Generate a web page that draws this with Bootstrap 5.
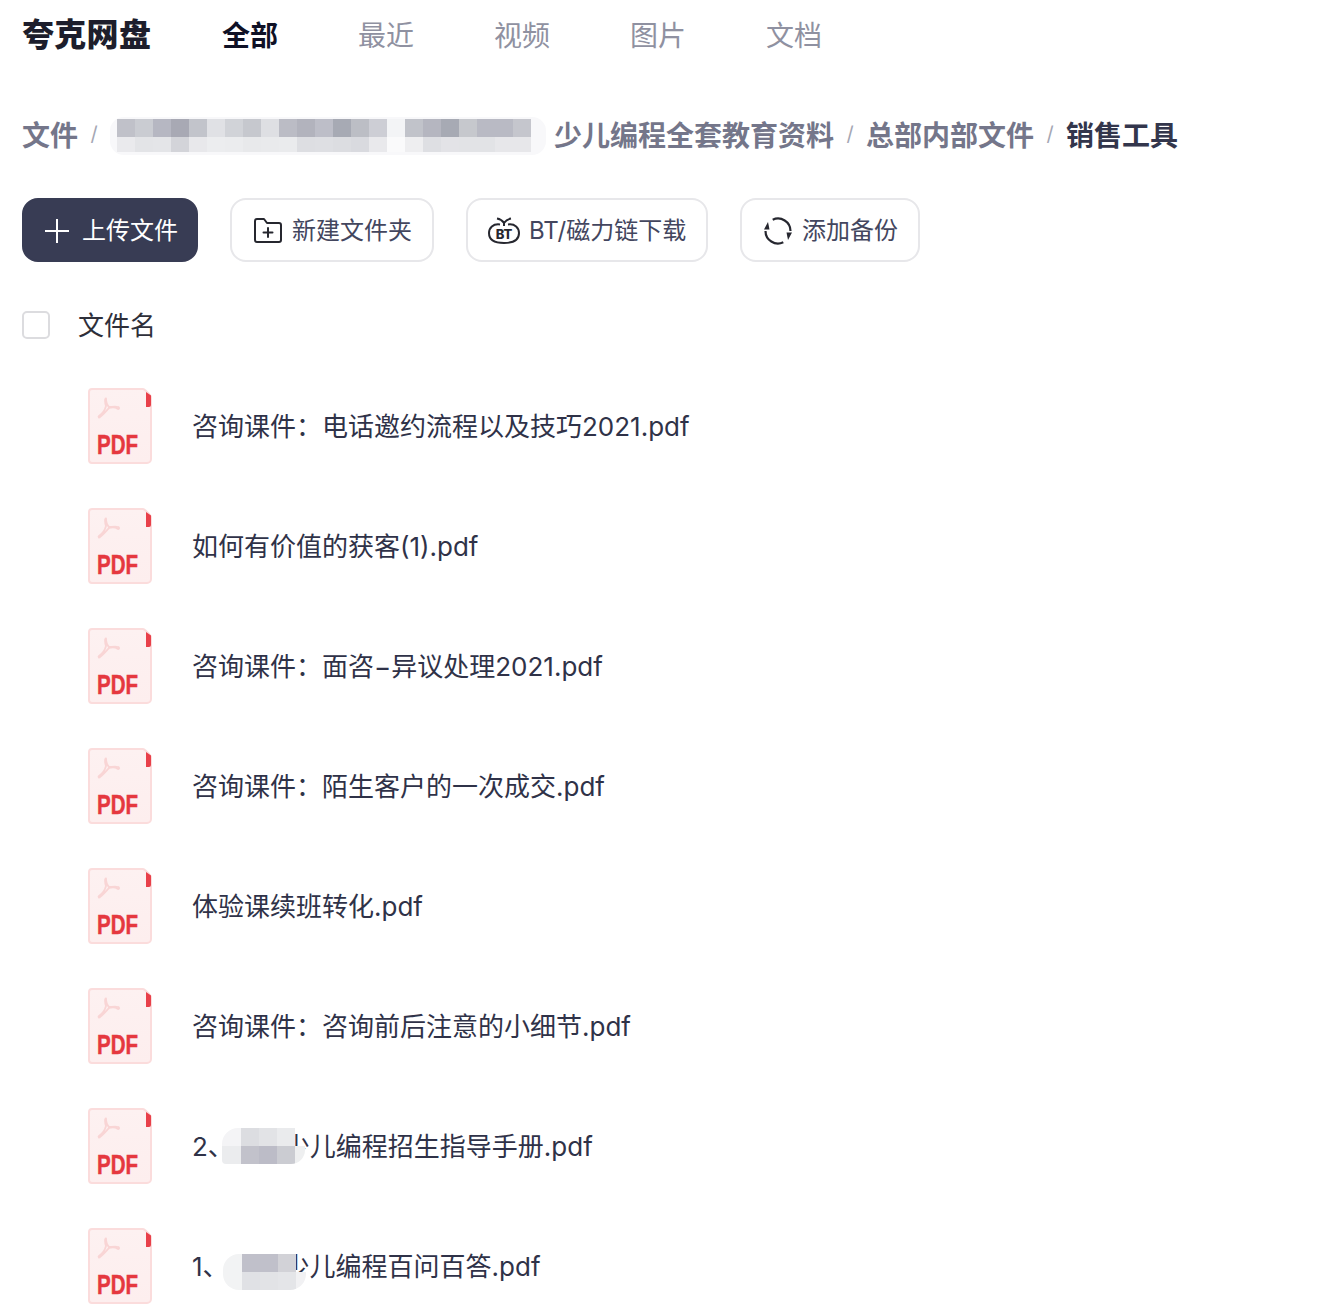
<!DOCTYPE html>
<html lang="zh-CN">
<head>
    <meta charset="UTF-8">
    <title>夸克网盘</title>
    <link href="https://cdn.jsdelivr.net/npm/bootstrap@5.3.2/dist/css/bootstrap.min.css" rel="stylesheet">
    <style>
        body {
            font-family: "Inter", "Noto Sans CJK SC", sans-serif;
            color: #2f3248;
            background: #fff;
        }
        .app-wrap { padding-left: 22px; }
        .top-bar { height: 72px; }
        .logo-text { font-size: 32px; font-weight: 900; color: #1d1e2c; width: 200px; letter-spacing: .3px; padding-bottom: 2px; }
        .top-link { font-size: 28px; color: #8f91a1; width: 136px; text-decoration: none; line-height: 40px; }
        .top-link.on { color: #0f1126; font-weight: 700; }
        .crumbs { margin-top: 44px; height: 40px; font-size: 28px; font-weight: 700; color: #74768a; line-height: 40px; }
        .crumbs .sep { width: 32px; text-align: center; font-size: 20px; font-weight: 400; color: #a5a7b4; padding-bottom: 4px; }
        .crumbs .cur { color: #33364c; }
        .crumb-blur { width: 444px; }
        .mosaic { display: grid; overflow: hidden; }
        .crumb-blur .mosaic {
            background: #f8f8fa; border-radius: 14px; width: 436px; height: 38px; padding: 2px 7px 3px;
            grid-template-columns: repeat(23, 18px); grid-template-rows: 18px 15px;
        }
        .tool-row { margin-top: 42px; gap: 32px; }
        .tool-btn {
            height: 64px; font-size: 24px; border-radius: 16px; border: 2px solid #e7e7ea; color: #43465e;
            padding: 2px 0 0 20px; display: flex; align-items: center; gap: 9px; background: #fff;
        }
        .tool-btn:hover { border-color: #e7e7ea; color: #43465e; }
        .tool-btn.upload { background: #383c54; border-color: #383c54; color: #fff; width: 176px; gap: 12px; }
        .w-folder { width: 204px; padding-left: 22px; gap: 10px; }
        .w-bt { width: 242px; }
        .w-backup { width: 180px; padding-left: 21px; }
        .list-head { margin-top: 44px; height: 38px; font-size: 26px; color: #2e2f3a; }
        .check-box { width: 28px; height: 28px; border: 2px solid #dcdcdf; border-radius: 5px; margin-right: 28px; }
        .file-list { margin-top: 22px; }
        .file-row { height: 120px; padding-left: 66px; font-size: 26px; color: #2f3248; }
        .file-row svg { flex: none; margin-right: 40px; overflow: visible; }
        .name-blur { display: inline-block; position: relative; height: 1px; }
        .name-blur .mosaic {
            position: absolute; width: 83px; height: 36px; z-index: 2;
            grid-template-columns: 19px 18px 18px 18px 10px; grid-template-rows: 18px 18px;
        }
        .blur-two { width: 50px; }
        .blur-two .mosaic { left: -12px; top: -27px; border-radius: 16px 4px 14px 4px; }
        .blur-one { width: 55px; }
        .blur-one .mosaic { left: -6px; top: -21px; border-radius: 16px 4px 16px 16px; }
    </style>
</head>
<body>
<div class="app-wrap">
    <div class="top-bar d-flex align-items-center">
        <div class="logo-text">夸克网盘</div>
        <a class="top-link on" href="#">全部</a>
        <a class="top-link" href="#">最近</a>
        <a class="top-link" href="#">视频</a>
        <a class="top-link" href="#">图片</a>
        <a class="top-link" href="#">文档</a>
    </div>

    <div class="crumbs d-flex align-items-center">
        <span>文件</span><span class="sep">/</span>
        <span class="crumb-blur"><span id="crumbMosaic" class="mosaic"></span></span>
        <span>少儿编程全套教育资料</span><span class="sep">/</span>
        <span>总部内部文件</span><span class="sep">/</span>
        <span class="cur">销售工具</span>
    </div>

    <div class="tool-row d-flex">
        <button class="btn tool-btn upload" type="button">
            <svg width="26" height="26" viewBox="0 0 26 26"><path d="M13 1v24M1 13h24" stroke="#fff" stroke-width="2" fill="none"/></svg>
            上传文件
        </button>
        <button class="btn tool-btn w-folder" type="button">
            <svg width="28" height="26" viewBox="0 0 28 26" fill="none" stroke="#26272f" stroke-width="2" stroke-linejoin="round"><path d="M1 3a2 2 0 0 1 2-2h7l3 4h12a2 2 0 0 1 2 2v15a2 2 0 0 1-2 2H3a2 2 0 0 1-2-2z"/><path d="M14 10v9M9.500 14.500h9" stroke-linecap="round"/></svg>
            新建文件夹
        </button>
        <button class="btn tool-btn w-bt" type="button">
            <svg width="32" height="28" viewBox="0 0 32 28" fill="none" stroke="#26272f" stroke-width="2"><path d="M12 7.500C5 6.500 1 11 1 16c0 6 5 10 15 10s15-4 15-10c0-5-4-9.500-11-8.500"/><path d="M9 1.500c3 .5 5 1.500 7 4.500 2-3 4-4 7-4.500M16 6v3"/><text x="16" y="22" text-anchor="middle" font-family="Inter, sans-serif" font-size="13" font-weight="800" fill="#26272f" stroke="none">BT</text></svg>
            BT/磁力链下载
        </button>
        <button class="btn tool-btn w-backup" type="button">
            <svg width="30" height="30" viewBox="0 0 30 30" fill="none" stroke="#26272f" stroke-width="2.200"><path d="M9.700 3.700A12.500 12.500 0 0 1 27.500 15"/><path d="M20.300 26.300A12.500 12.500 0 0 1 2.500 15"/><path d="M23.500 16.500h5.500l-4 7.500z" fill="#26272f" stroke="none"/><path d="M6.500 13.500H1l4-7.500z" fill="#26272f" stroke="none"/></svg>
            添加备份
        </button>
    </div>

    <div class="list-head d-flex align-items-center">
        <span class="check-box"></span>
        <span>文件名</span>
    </div>

    <div id="fileList" class="file-list"></div>
</div>

<script src="https://cdn.jsdelivr.net/npm/bootstrap@5.3.2/dist/js/bootstrap.bundle.min.js"></script>
<script>
    const pdfIcon = `
        <svg width="64" height="76" viewBox="0 0 64 76">
            <defs><linearGradient id="pdfBg" x1="0" y1="0" x2="0" y2="1"><stop offset="0" stop-color="#fdf1f1"/><stop offset="1" stop-color="#fdeeee"/></linearGradient></defs>
            <path d="M4 1h51c1 0 2 1 3 2l3 3h0c1 1 2 2 2 4v61a4 4 0 0 1-4 4H4a3 3 0 0 1-3-3V4a3 3 0 0 1 3-3z" fill="url(#pdfBg)" stroke="#fbdcdc" stroke-width="2"/>
            <path d="M58 4l5 3.500V17a2 2 0 0 1-2 2h-3z" fill="#e8404a"/>
            <path d="M18 10.500c-1.500 0-1 4.500 0 7.500-1 4-4 8-7 10-1 1 0 2 1 1 3-2 7-7 9-9 3-1 6-1 9 1 2 0 1-2 0-2-3-1-6 0-9 0-2-2-3-5-3-8.500z" fill="none" stroke="#f9d5d5" stroke-width="1.800" stroke-linejoin="round"/>
            <text x="9" y="66" textLength="41" lengthAdjust="spacingAndGlyphs" font-family="'Liberation Sans Narrow', 'Liberation Sans', sans-serif" font-size="28" font-weight="700" fill="#e5383f" stroke="#e5383f" stroke-width=".5">PDF</text>
        </svg>`;

    const crumbCells = ['#c0c1c9','#caccd2','#b6b7c2','#a8a9b4','#c2c4cb','#e0e1e5','#d1d3d8','#c6c8ce','#dedfe3','#bbbcc5','#b2b3bd','#bdbec8','#a7aab4','#bcbec5','#cdced5','#f3f4f6','#c1c3ca','#b5b6c0','#a7aab4','#c6c8cd','#b9bac4','#b9bac4','#c5c6cd',
        '#eaeaed','#e3e4e7','#e4e5e8','#d3d4d9','#e8e8eb','#ecedef','#ebecee','#e8e9eb','#e9eaec','#eaebed','#dddee2','#dedfe3','#dcdde1','#d9dadf','#e9e9ec','#fafafb','#eeeef0','#dedfe3','#e3e3e7','#e2e3e6','#e2e3e6','#e7e7ea','#e7e7ea'];
    const nameCellsTwo = ['#f4f4f6','#dcdde1','#e2e3e6','#eaebed','transparent','#ebecee','#c2c2cb','#bcbcc7','#cbccd2','#eeeff0'];
    const nameCellsOne = ['#f2f3f4','#c0c0ca','#c0c0ca','#d2d2d7','transparent','#f2f3f4','#e0e1e5','#e2e3e6','#e4e5e8','#f1f1f3'];

    function mosaicCells(colors) {
        return colors.map(c => `<span style="background:${c}"></span>`).join('');
    }

    // hidden part of a name is covered by a mosaic
    const files = [
        { name: '咨询课件：电话邀约流程以及技巧2021.pdf' },
        { name: '如何有价值的获客(1).pdf' },
        { name: '咨询课件：面咨−异议处理2021.pdf' },
        { name: '咨询课件：陌生客户的一次成交.pdf' },
        { name: '体验课续班转化.pdf' },
        { name: '咨询课件：咨询前后注意的小细节.pdf' },
        { before: '2、', name: '少儿编程招生指导手册.pdf', cells: nameCellsTwo, blur: 'blur-two' },
        { before: '1、', name: '少儿编程百问百答.pdf', cells: nameCellsOne, blur: 'blur-one' }
    ];

    document.getElementById('crumbMosaic').innerHTML = mosaicCells(crumbCells);

    document.getElementById('fileList').innerHTML = files.map(file => {
        const blur = file.cells ? `${file.before}<span class="name-blur ${file.blur}"><span class="mosaic">${mosaicCells(file.cells)}</span></span>` : '';
        return `<div class="file-row d-flex align-items-center">${pdfIcon}<span>${blur}${file.name}</span></div>`;
    }).join('');
</script>
</body>
</html>
